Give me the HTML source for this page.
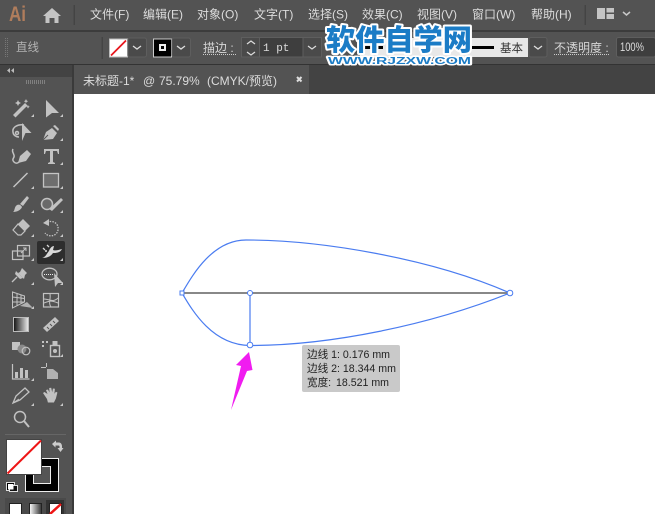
<!DOCTYPE html>
<html><head><meta charset="utf-8"><style>
html,body{margin:0;padding:0;width:655px;height:514px;overflow:hidden;background:#fff}
svg{display:block}
text{font-family:"Liberation Sans","Noto Sans CJK SC",sans-serif}
.m{font-size:12px;fill:#dcdcdc}
.c{font-size:12px;fill:#d6d6d6}
.i{fill:#c2c2c2;stroke:none}
.l{fill:none;stroke:#c2c2c2;stroke-width:1.5}
.tt{font-size:10.6px;fill:#222}
.tb{font-size:12px;fill:#dcdcdc}
</style></head><body>
<svg width="655" height="514" viewBox="0 0 655 514" xmlns="http://www.w3.org/2000/svg">
<defs><linearGradient id="g"><stop offset="0" stop-color="#111"/><stop offset="1" stop-color="#eee"/></linearGradient><linearGradient id="g2"><stop offset="0" stop-color="#fff"/><stop offset="1" stop-color="#333"/></linearGradient></defs>
<rect width="655" height="514" fill="#fff"/>
<rect width="655" height="30" fill="#535353"/>
<rect y="30" width="655" height="2" fill="#3c3c3c"/>
<rect y="32" width="655" height="32" fill="#535353"/>
<rect y="64" width="655" height="30" fill="#434343"/>
<rect y="64" width="655" height="1" fill="#333"/>
<rect y="65" width="74" height="449" fill="#535353"/>
<rect y="65" width="72" height="12" fill="#434343"/>
<rect x="72" y="65" width="2" height="449" fill="#3a3a3a"/>
<!-- menu -->
<text x="9" y="21" textLength="17" lengthAdjust="spacingAndGlyphs" style="font-size:21px;font-weight:bold;fill:#b07d5c">Ai</text>
<path d="M52 8 L61 16 H58.500 V23 H54.500 V18 H49.500 V23 H45.500 V16 H43 Z" fill="#c4c4c4"/>
<rect x="73.500" y="5" width="1.500" height="20" fill="#444"/>
<text class="m" x="90" y="18.500">文件(F)</text>
<text class="m" x="143" y="18.500">编辑(E)</text>
<text class="m" x="197" y="18.500">对象(O)</text>
<text class="m" x="254" y="18.500">文字(T)</text>
<text class="m" x="308" y="18.500">选择(S)</text>
<text class="m" x="362" y="18.500">效果(C)</text>
<text class="m" x="417" y="18.500">视图(V)</text>
<text class="m" x="472" y="18.500">窗口(W)</text>
<text class="m" x="531" y="18.500">帮助(H)</text>
<rect x="584.500" y="5" width="1.500" height="20" fill="#444"/>
<path d="M597 8h8v11h-8zM606.500 8h7.500v4.500h-7.500zM606.500 14h7.500v5h-7.500z" fill="#c4c4c4"/>
<path d="M623 12l3.500 3 3.500-3" fill="none" stroke="#c8c8c8" stroke-width="1.500"/>
<!-- control bar -->
<path d="M5.500 38v19M7.500 38v19" stroke="#777" stroke-width="1" stroke-dasharray="1 1"/>
<text x="16" y="51" style="font-size:11.500px;fill:#b4b4b4">直线</text>
<rect x="101.500" y="37" width="1.500" height="22" fill="#444"/>
<rect x="109.500" y="39" width="18" height="18" fill="#fff" stroke="#bbb"/>
<path d="M111 55.500 L126 40.500" stroke="#e8161c" stroke-width="1.800"/>
<rect x="128" y="38" width="18.500" height="19" rx="2" fill="#4a4a4a" stroke="#5e5e5e"/>
<path d="M133 46l4 3 4-3" fill="none" stroke="#ddd" stroke-width="1.300"/>
<rect x="153.500" y="39" width="18" height="18" fill="#000" stroke="#ccc"/>
<rect x="160" y="45" width="5" height="5" fill="#000" stroke="#eee" stroke-width="2"/>
<rect x="172" y="38" width="18.500" height="19" rx="2" fill="#4a4a4a" stroke="#5e5e5e"/>
<path d="M177 46l4 3 4-3" fill="none" stroke="#ddd" stroke-width="1.300"/>
<text class="c" x="203" y="52">描边 :</text>
<path d="M203 54.500h33" stroke="#ccc" stroke-dasharray="1 1"/>
<rect x="241.500" y="37.500" width="80" height="19.500" rx="2" fill="#3e3e3e" stroke="#5e5e5e"/>
<rect x="241.500" y="37.500" width="18" height="19.500" fill="#4a4a4a" stroke="#5e5e5e"/>
<rect x="303" y="37.500" width="18.500" height="19.500" fill="#4a4a4a" stroke="#5e5e5e"/>
<path d="M247 44l4-3 4 3M247 52l4 3 4-3M308 46l4 3 4-3" fill="none" stroke="#ddd" stroke-width="1.200"/>
<text x="263" y="51" style="font-size:11px;fill:#ddd;font-family:'Liberation Mono',monospace">1 pt</text>
<!-- stroke profile -->
<rect x="360" y="38" width="168" height="19" fill="#e8e8e8"/>
<rect x="365" y="46" width="18" height="3" fill="#000"/>
<rect x="472" y="46" width="22" height="3" fill="#000"/>
<text x="500" y="52" style="font-size:11.500px;fill:#333">基本</text>
<rect x="529" y="37.500" width="18" height="19.500" rx="2" fill="#4a4a4a" stroke="#5e5e5e"/>
<path d="M534 46l4 3 4-3" fill="none" stroke="#ddd" stroke-width="1.300"/>
<text class="c" x="554" y="52">不透明度 :</text>
<path d="M554 54.500h56" stroke="#ccc" stroke-dasharray="1 1"/>
<rect x="616.500" y="37.500" width="39" height="19.500" rx="2" fill="#3e3e3e" stroke="#5e5e5e"/>
<text x="620" y="51" textLength="24" lengthAdjust="spacingAndGlyphs" style="font-size:12px;fill:#ddd">100%</text>
<!-- watermark -->
<text x="326" y="50" textLength="146" lengthAdjust="spacingAndGlyphs" style="font-size:29px;font-weight:900;fill:#1b7cc6;stroke:#fff;stroke-width:4px;paint-order:stroke;stroke-linejoin:round;font-family:'Noto Sans CJK SC',sans-serif">软件自学网</text>
<text x="328" y="64" textLength="143" lengthAdjust="spacingAndGlyphs" style="font-size:10.500px;font-weight:bold;fill:#1b7cc6;stroke:#fff;stroke-width:3px;paint-order:stroke;stroke-linejoin:round">WWW.RJZXW.COM</text>
<!-- tab -->
<rect x="74" y="65" width="235" height="29" fill="#535353"/>
<text class="tb" x="83" y="85">未标题-1*</text>
<text class="tb" x="143" y="85">@</text>
<text class="tb" x="159" y="85">75.79%</text>
<text class="tb" x="207" y="85">(CMYK/预览)</text>
<path d="M297 77l4.500 4.500M301.500 77l-4.500 4.500" stroke="#ddd" stroke-width="2"/>
<rect x="74" y="94" width="581" height="420" fill="#fff"/>
<!-- panel header -->
<path d="M10 68l-3 2.500 3 2.500zM14 68l-3 2.500 3 2.500z" fill="#bbb"/>
<path d="M26.500 84v-4M28.500 84v-4M30.500 84v-4M32.500 84v-4M34.500 84v-4M36.500 84v-4M38.500 84v-4M40.500 84v-4M42.500 84v-4M44.500 84v-4" stroke="#808080" stroke-width="1"/>
<!-- tools -->
<g>
<!-- wand -->
<path d="M13 115l12-12 2.500 2.500-12 12z" class="i"/><path d="M18 100l1 2 2 1-2 1-1 2-1-2-2-1 2-1zM26 99l.7 1.500 1.500.7-1.500.7-.7 1.500-.7-1.500-1.500-.7 1.500-.7zM28 105l.6 1.200 1.200.6-1.200.6-.6 1.200-.6-1.200-1.200-.6 1.200-.6z" class="i"/>
<path d="M46 100l13 13h-7l-6 4.500z" class="i"/>
<!-- lasso -->
<path d="M24 125c-6-1-12 2-11 7 0 3 3 5 6 5" class="l"/><circle cx="17" cy="133" r="1.500" class="l"/><path d="M22 123l9.500 10h-6l-3.500 8z" class="i"/>
<!-- pen -->
<path d="M43 140l3-8 6-4 5 5-4 6z" class="i"/><path d="M53 126l2-1 4 4-1 2z" class="i"/><path d="M43 140l5-5" stroke="#535353"/>
<!-- curvature -->
<path d="M13 149c-2 3 2 5 1 8-1 2-2 3 0 5s4 1 5 0" class="l"/><path d="M18 163l2-7 7-6 4 4-5 7z" class="i"/>
<!-- T -->
<path d="M44 149h15v5h-1l-1-3h-4v11l2 1v1h-7v-1l2-1v-11h-4l-1 3h-1z" class="i"/>
<!-- line -->
<path d="M13.500 187l14-14" stroke="#c2c2c2" stroke-width="1.500"/>
<!-- rect -->
<rect x="43.500" y="173.500" width="15" height="13.500" fill="#6e6e6e" stroke="#c4c4c4" stroke-width="1.300"/>
<!-- brush -->
<path d="M20 204l7-8 2 2-6 8zM13 212c2-1 1-5 4-7 2-1 4 0 5 2-1 3-5 5-9 5z" class="i"/>
<!-- blob -->
<circle cx="47" cy="204" r="5.500" fill="#6a6a6a" stroke="#c2c2c2" stroke-width="1.500"/><path d="M49 209l12-11 2 2-11 11z" class="i"/>
<!-- eraser -->
<path d="M23 219l7 7-5 5-7-7z" class="i"/><path d="M18 224l7 7-4 4h-3l-5-5z" fill="none" stroke="#c2c2c2" stroke-width="1.200"/>
<!-- rotate -->
<path d="M47 222c7-2 12 2 11 8-1 6-9 8-13 3" fill="none" stroke="#c2c2c2" stroke-width="1.300" stroke-dasharray="1.500 1.200"/><path d="M43 223l6-4v7z" class="i"/>
<!-- scale -->
<rect x="12.500" y="251" width="10.500" height="8.500" fill="none" stroke="#c2c2c2" stroke-width="1.200"/><rect x="17.500" y="245.500" width="12" height="10.500" fill="none" stroke="#c2c2c2" stroke-width="1.200"/><path d="M21 253l5-5M23 248h3v3" fill="none" stroke="#c2c2c2"/>
<!-- width selected -->
<rect x="37" y="241" width="28" height="23" rx="2" fill="#2d2d2d"/>
<path d="M42 258c4-1 5-5 7-7 1-3 3-5 5-5l-1 4c3 1 5 0 9-1-2 4-6 4-9 4-2 3-5 5-11 5z" fill="#d8d8d8"/><circle cx="46" cy="251" r="1" fill="#d8d8d8"/><path d="M43 248l2 2M47 245l2 2" stroke="#d8d8d8" stroke-width="1.300"/>
<!-- pin -->
<path d="M22 268l5 5-2 2-1 4-6-6 2-1z" class="i"/><path d="M16 271l7 7-3 1-5-5z" class="i"/><path d="M12 282l5-5" stroke="#c2c2c2" stroke-width="1.300"/>
<!-- shape builder -->
<ellipse cx="49.500" cy="274" rx="7.500" ry="5.800" fill="none" stroke="#c2c2c2" stroke-width="1.300"/><path d="M54 273l9 10h-5l-3 4z" class="i"/><path d="M44 274.500h10" stroke="#eee" stroke-dasharray="1 1"/>
<!-- perspective -->
<path d="M12.500 292l12 4v6l-12 6zM12.500 297l12 1.500M12.500 302l12 0M17 293.500v12.500M21 295v9" fill="none" stroke="#c2c2c2" stroke-width="1"/><path d="M20 306l7-4 6 6z" class="i" opacity=".85"/>
<!-- mesh -->
<rect x="43.500" y="293.500" width="15" height="13.500" fill="none" stroke="#c2c2c2" stroke-width="1.200"/><path d="M44 299c5 0 9 4 14-1M50 294c1 5-2 9 1 13M44 303c5-2 7-3 14 0" fill="none" stroke="#c2c2c2"/>
<!-- gradient -->
<rect x="13.500" y="317.500" width="15" height="14" fill="url(#g)" stroke="#bbb"/>
<!-- measure -->
<path d="M43 328l12-11 4 4-12 11z" class="i"/><path d="M47 327l2 2M50 324l2 2M53 321l2 2" stroke="#535353"/>
<!-- blend -->
<rect x="12" y="342" width="8" height="8" class="i"/><circle cx="22" cy="349" r="4.500" fill="#8a8a8a"/><circle cx="26" cy="351" r="3.800" fill="none" stroke="#c2c2c2" stroke-width="1.200"/>
<!-- symbol sprayer -->
<path d="M42 341h2v2h-2zM46 341h2v2h-2zM42 345h2v2h-2zM47 339h2v0z" class="i"/><rect x="50.500" y="345.500" width="9" height="11" fill="none" stroke="#c2c2c2" stroke-width="1.400"/><rect x="52.500" y="341" width="5" height="4" class="i"/><circle cx="55" cy="351" r="2" class="i"/>
<!-- graph -->
<path d="M12.500 364v15h17" fill="none" stroke="#c2c2c2" stroke-width="1.200"/><path d="M15 372h3v6h-3zM20 368h3v10h-3zM25 370h3v8h-3z" class="i"/>
<!-- artboard -->
<path d="M47 369h6l5 4v6h-11z" class="i" opacity=".85"/><path d="M41 367.500h5M46.500 363v4" stroke="#c2c2c2"/>
<!-- slice -->
<path d="M13 403l3-7 9-8 4 4-9 8z" fill="none" stroke="#c2c2c2" stroke-width="1.300"/><path d="M13 403l6-4" stroke="#c2c2c2"/>
<!-- hand -->
<path d="M47 399l-4-6 1.500-1 3 2-1.500-4 2-.5 1.500 3-.3-4.500 2-.3 1 4.500.7-3.700 2 .3-.5 5 1.500-2 1.500 .7-1.500 6-2 4h-6z" class="i"/>
<!-- zoom -->
<circle cx="20" cy="417" r="5.500" fill="none" stroke="#c2c2c2" stroke-width="1.500"/><path d="M24 421l5 6" stroke="#c2c2c2" stroke-width="2"/>
<!-- flyout marks -->
<path d="M34 114v3h-3zM63 114v3h-3zM63 138v3h-3zM63 162v3h-3zM34 186v3h-3zM63 186v3h-3zM34 210v3h-3zM63 210v3h-3zM34 234v3h-3zM63 234v3h-3zM34 258v3h-3zM63 258v3h-3zM34 282v3h-3zM63 282v3h-3zM34 306v3h-3zM63 354v3h-3zM34 378v3h-3zM34 403v3h-3zM63 403v3h-3z" fill="#c8c8c8"/>
</g>
<rect x="5" y="434" width="61" height="1" fill="#666"/>
<!-- colours -->
<rect x="25.500" y="458.500" width="33" height="33" fill="#000" stroke="#eee"/>
<rect x="33.500" y="466.500" width="17" height="17" fill="#555" stroke="#eee"/>
<rect x="6.500" y="439.500" width="35" height="35" fill="#fff" stroke="#444"/>
<path d="M7.500 473.500L41 440.500" stroke="#ee1515" stroke-width="2"/>
<path d="M52 444l4-3.500v2h3c2 0 3 2 3 4v1.500h1.500l-3 4-3-4h2v-1.500c0-1-1-1-2-1h-2v2z" fill="#ccc"/>
<rect x="6.500" y="482.500" width="8" height="8" fill="#000" stroke="#ddd"/><rect x="9.500" y="485.500" width="8" height="6" fill="#111" stroke="#ddd"/><rect x="8" y="484" width="5.500" height="5.500" fill="#fff"/>
<rect x="5" y="498" width="61" height="16" fill="#4a4a4a"/>
<rect x="46" y="500" width="18" height="14" fill="#333"/>
<rect x="9.500" y="503.500" width="12" height="11" fill="#fff" stroke="#222"/>
<rect x="29.500" y="503.500" width="12" height="11" fill="url(#g2)" stroke="#222"/>
<rect x="49.500" y="503.500" width="12" height="11" fill="#fff" stroke="#222"/>
<path d="M50 514l11-10" stroke="#ee1515" stroke-width="2.500"/>
<!-- canvas art -->
<path d="M182 293C192 276 212 240 246 240C320 240 430 258 510 293C430 325 330 345.500 250 345.500C212 345 192 310 182 293Z" fill="none" stroke="#4a7cf0" stroke-width="1.200"/>
<path d="M182 293H510" stroke="#777" stroke-width="1.800"/>
<path d="M250 293V345" stroke="#4a7cf0" stroke-width="1.200"/>
<rect x="180" y="291" width="4" height="4" fill="#fff" stroke="#4a7cf0"/>
<circle cx="250" cy="293" r="2.500" fill="#fff" stroke="#4a7cf0"/>
<circle cx="250" cy="345" r="2.800" fill="#fff" stroke="#4a7cf0"/>
<circle cx="510" cy="293" r="2.800" fill="#fff" stroke="#4a7cf0"/>
<path d="M249 352L252.500 370 247 371 231 410 241 366 236 365Z" fill="#f01cf0"/>
<rect x="302" y="345" width="98" height="47" rx="2" fill="#c9c9c9"/>
<text class="tt" x="307" y="358">边线 1: 0.176 mm</text>
<text class="tt" x="307" y="372">边线 2: 18.344 mm</text>
<text class="tt" x="307" y="386">宽度:</text>
<text class="tt" x="336" y="386">18.521 mm</text>
</svg>
</body></html>
